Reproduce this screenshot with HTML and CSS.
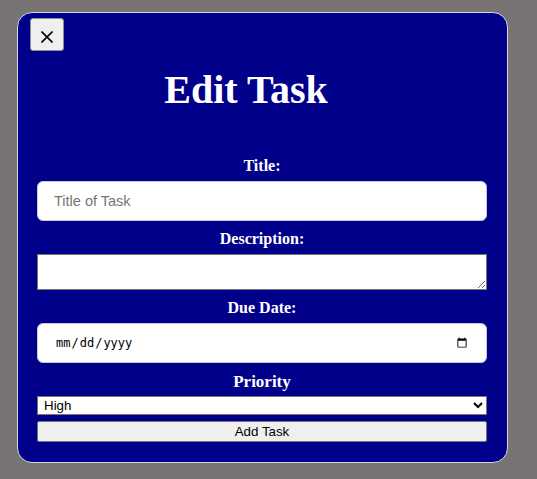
FILE: index.html
```html
<!DOCTYPE html>
<html lang="en">
<head>
<meta charset="utf-8">
<title>Edit Task</title>
<link rel="stylesheet" href="styles.css">
</head>
<body>
<div class="modal">
  <button class="close" type="button" aria-label="Close">
    <svg width="12" height="12" viewBox="0 0 12 12"><path d="M0.5 0.5 L11.5 11.5 M11.5 0.5 L0.5 11.5" stroke="#000" stroke-width="1.6" fill="none"/></svg>
  </button>
  <h1 class="heading">Edit Task</h1>
  <form class="form">
    <label class="label" for="title">Title:</label>
    <input class="field" id="title" type="text" placeholder="Title of Task">
    <label class="label" for="desc">Description:</label>
    <textarea class="area" id="desc"></textarea>
    <label class="label" for="due">Due Date:</label>
    <input class="field date" id="due" type="date">
    <label class="label big" for="prio">Priority</label>
    <select class="select" id="prio">
      <option>High</option>
      <option>Medium</option>
      <option>Low</option>
    </select>
    <button class="submit" type="button">Add Task</button>
  </form>
</div>
</body>
</html>
```
FILE: styles.css
```css
html, body {
  margin: 0;
  padding: 0;
}
body {
  background: #797474;
  width: 537px;
  height: 479px;
  overflow: hidden;
  padding-top: 12px;
  box-sizing: border-box;
}
.modal {
  box-sizing: border-box;
  width: 491px;
  height: 451px;
  margin-left: 17px;
  background: #00008b;
  border: 1px solid #d8d8e8;
  border-radius: 15px;
  padding: 5px 20px 20px 19px;
  display: flex;
  flex-direction: column;
}
.close {
  align-self: flex-start;
  margin-left: -7px;
  width: 34px;
  height: 33px;
  padding: 4px 0 0 0;
  background: #efefef;
  border: 1px solid #8f8f8f;
  border-radius: 3px;
  display: flex;
  align-items: center;
  justify-content: center;
}
.close svg {
  display: block;
}
.heading {
  margin: 16px 0 0 0;
  padding-right: 32px;
  font-family: "Liberation Serif", serif;
  font-weight: bold;
  font-size: 40px;
  line-height: 46px;
  color: #fff;
  text-align: center;
}
.form {
  display: flex;
  flex-direction: column;
  margin-top: 35px;
}
.label {
  display: block;
  font-family: "Liberation Serif", serif;
  font-weight: bold;
  font-size: 16px;
  line-height: 18px;
  color: #fff;
  text-align: center;
  margin: 9px 0 6px;
}
.label.big {
  font-size: 17px;
  line-height: 19px;
  margin-bottom: 5px;
}
.field {
  box-sizing: border-box;
  width: 100%;
  height: 40px;
  margin: 0;
  border: 1px solid #c8c8d0;
  border-radius: 6px;
  background: #fff;
  padding: 0 16px;
  font-family: "Liberation Sans", Arial, sans-serif;
  font-size: 14.5px;
  color: #000;
}
.field::placeholder {
  color: #757575;
}
.date {
  padding-left: 17px;
  font-family: "DejaVu Sans Mono", monospace;
  font-size: 12px;
}
.area {
  box-sizing: border-box;
  width: 100%;
  height: 36px;
  margin: 0;
  border: 1px solid #767676;
  background: #fff;
  resize: vertical;
  display: block;
}
.select {
  box-sizing: border-box;
  width: 100%;
  height: 19px;
  margin: 0;
  padding: 0 0 0 2px;
  font-family: "Liberation Sans", Arial, sans-serif;
  font-size: 13.333px;
  border: 1px solid #767676;
  background: #fff;
  color: #000;
}
.submit {
  box-sizing: border-box;
  width: 100%;
  height: 21px;
  margin: 6px 0 0 0;
  padding: 0;
  font-family: "Liberation Sans", Arial, sans-serif;
  font-size: 13.333px;
  background: #efefef;
  border: 1px solid #767676;
  border-radius: 2px;
  color: #000;
}
```
